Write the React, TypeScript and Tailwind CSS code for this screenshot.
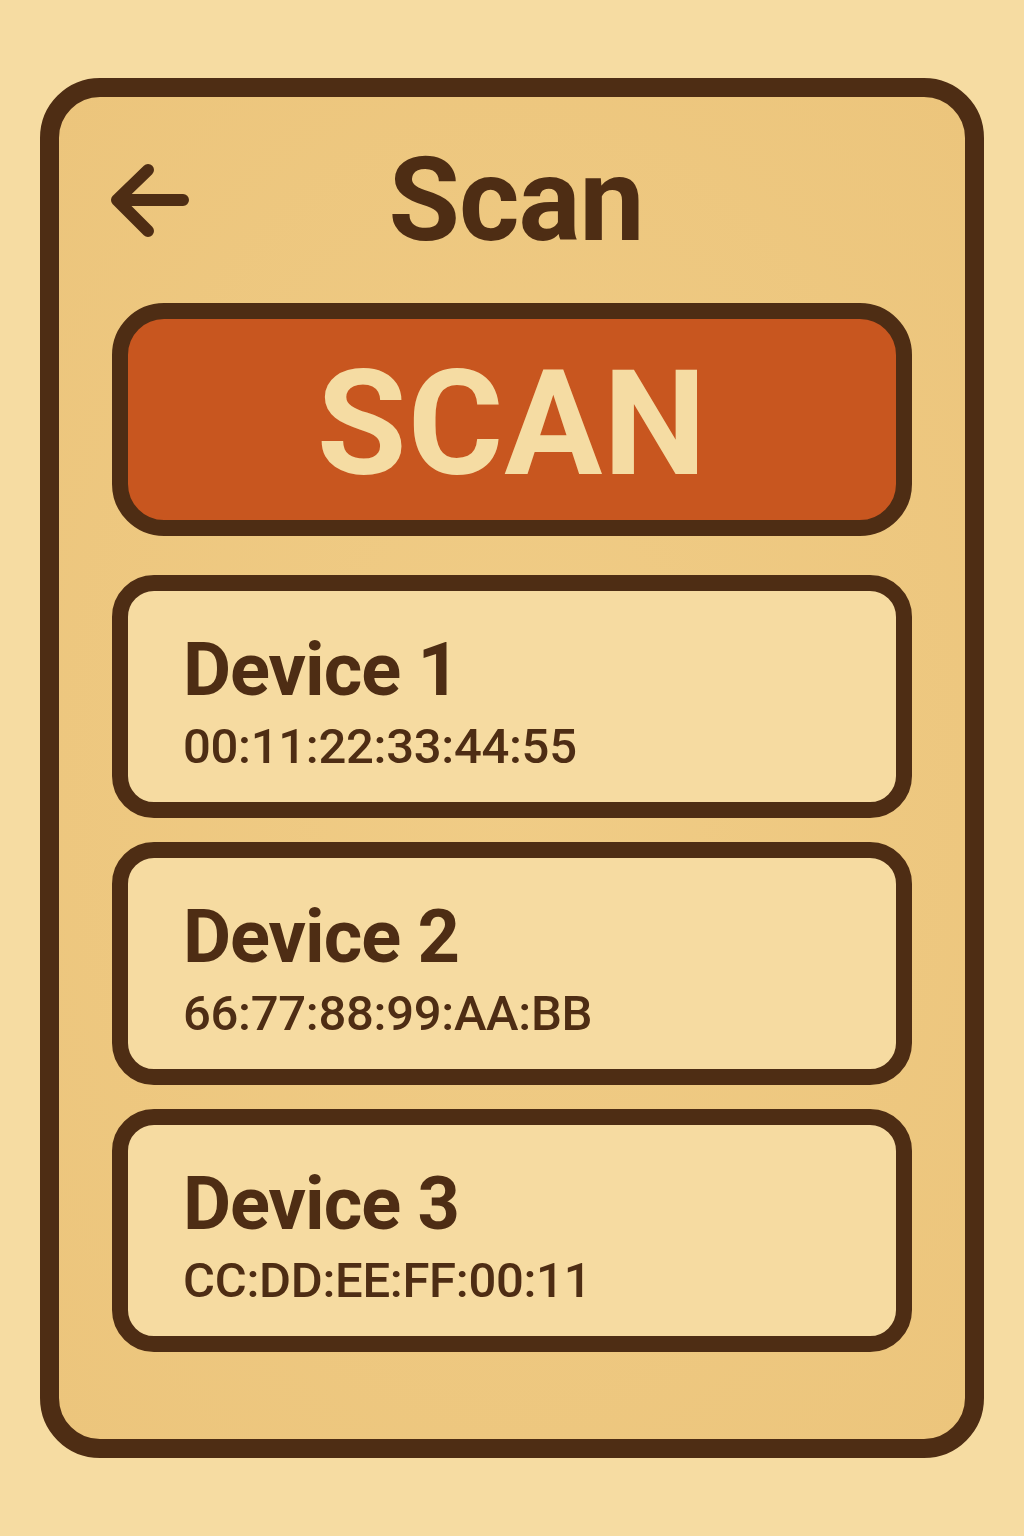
const devices = [
  { name: "Device 1", mac: "00:11:22:33:44:55" },
  { name: "Device 2", mac: "66:77:88:99:AA:BB" },
  { name: "Device 3", mac: "CC:DD:EE:FF:00:11" },
];

const BackArrow = () => (
  <svg width="84" height="82" viewBox="0 0 84 82" fill="none">
    <path
      d="M40 10 L9 40 L40 71 M9 40 L75 40"
      stroke="#4e2d14"
      strokeWidth="12"
      strokeLinecap="round"
      strokeLinejoin="round"
    />
  </svg>
);

const App = () => {
  return (
    <div
      className="min-h-[1536px] w-[1024px] bg-[#f6dca2] pt-[78px] pl-[40px]"
      style={{ fontFamily: "Roboto, 'Liberation Sans', sans-serif" }}
    >
      <div className="h-[1380px] w-[944px] rounded-[60px] border-[19px] border-[#4e2d14] bg-[radial-gradient(ellipse_at_center,#f0cc86,#ecc57c)] px-[53px]">
        <div className="grid h-[206px] grid-cols-[1fr_auto_1fr] items-center">
          <div className="-ml-[4px] pt-[2px]">
            <BackArrow />
          </div>
          <h1 className="ml-[8px] text-[116px] leading-none font-bold tracking-[-1px] text-[#4e2d14]">
            Scan
          </h1>
          <div />
        </div>

        <button className="flex h-[233px] w-full items-center justify-center rounded-[52px] border-[16px] border-[#4e2d14] bg-[#c8561f] pt-[10px]">
          <span className="text-[146px] leading-none font-bold tracking-[1px] text-[#f5dca3]">
            SCAN
          </span>
        </button>

        <div className="mt-[39px] flex flex-col gap-[24px]">
          {devices.map((device) => (
            <div
              key={device.name}
              className="flex h-[243px] flex-col rounded-[42px] border-[16px] border-[#4e2d14] bg-[#f6dba1] pl-[55px] pt-[42px]"
            >
              <div className="text-[74px] leading-none font-bold tracking-[-1px] text-[#4e2d14]">
                {device.name}
              </div>
              <div className="mt-[15px] text-[49px] leading-none font-medium tracking-[-0.3px] text-[#4e2d14]">
                {device.mac}
              </div>
            </div>
          ))}
        </div>
      </div>
    </div>
  );
};

export default App;
